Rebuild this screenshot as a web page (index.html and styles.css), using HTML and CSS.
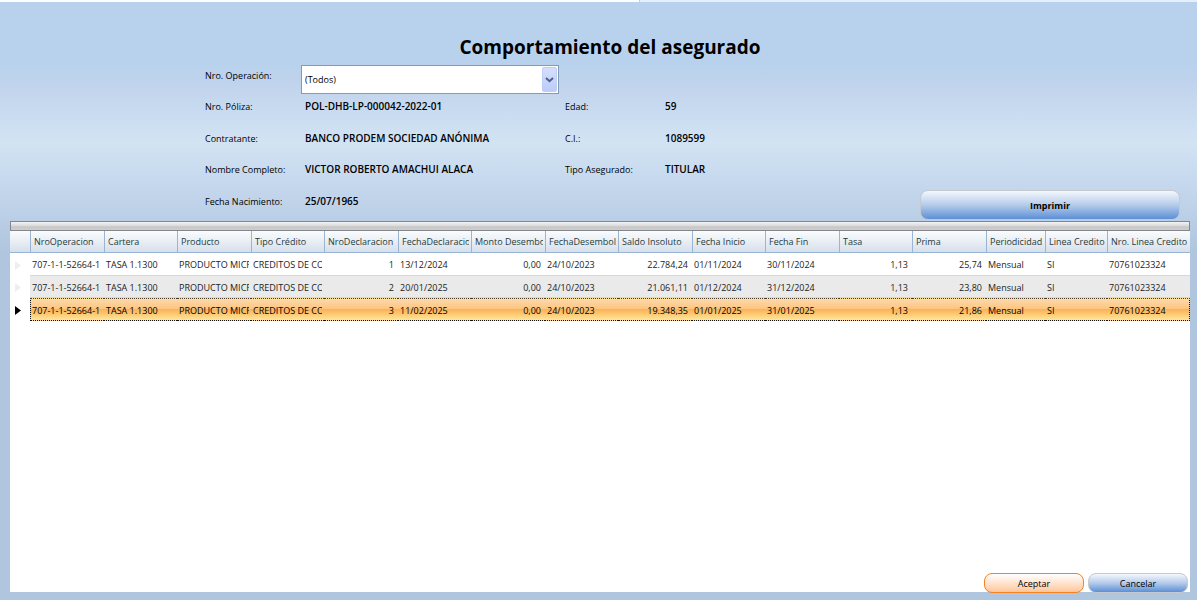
FILE: index.html
```html
<!DOCTYPE html>
<html lang="es">
<head>
<meta charset="utf-8">
<title>Comportamiento del asegurado</title>
<link rel="stylesheet" href="styles.css">
</head>
<body>
<div class="topstrip"><span></span></div>
<main class="page">
  <h1 class="title">Comportamiento del asegurado</h1>
  <form class="summary">
    <div class="fields">
      <label class="field-name" for="operacion">Nro. Operación:</label>
      <div class="combo">
        <select id="operacion"><option>(Todos)</option></select>
        <span class="combo-arrow"><svg width="9" height="6" viewBox="0 0 9 6"><path d="M1 1l3.5 3.2L8 1" fill="none" stroke="#4d6185" stroke-width="2"/></svg></span>
      </div>
      <span class="blank"></span><span class="blank"></span>
      <span class="field-name">Nro. Póliza:</span><span class="field-value">POL-DHB-LP-000042-2022-01</span>
      <span class="field-name">Edad:</span><span class="field-value">59</span>
      <span class="field-name">Contratante:</span><span class="field-value">BANCO PRODEM SOCIEDAD ANÓNIMA</span>
      <span class="field-name">C.I.:</span><span class="field-value">1089599</span>
      <span class="field-name">Nombre Completo:</span><span class="field-value">VICTOR ROBERTO AMACHUI ALACA</span>
      <span class="field-name">Tipo Asegurado:</span><span class="field-value">TITULAR</span>
      <span class="field-name">Fecha Nacimiento:</span><span class="field-value">25/07/1965</span>
    </div>
    <button class="btn btn-print" type="button">Imprimir</button>
  </form>
  <section class="panel">
    <div class="groupbar"></div>
    <table class="grid">
      <colgroup>
        <col class="w-mark"><col class="w-a"><col class="w-b"><col class="w-a"><col class="w-b"><col class="w-a"><col class="w-b"><col class="w-a"><col class="w-b"><col class="w-a"><col class="w-b"><col class="w-a"><col class="w-b"><col class="w-a"><col class="w-period"><col class="w-line"><col class="w-nro">
      </colgroup>
      <thead>
        <tr><th class="mark"></th><th>NroOperacion</th><th>Cartera</th><th>Producto</th><th>Tipo Crédito</th><th>NroDeclaracion</th><th><div class="clip">FechaDeclaracio</div></th><th><div class="clip">Monto Desembo</div></th><th><div class="clip">FechaDesembol</div></th><th>Saldo Insoluto</th><th>Fecha Inicio</th><th>Fecha Fin</th><th>Tasa</th><th>Prima</th><th>Periodicidad</th><th>Linea Credito</th><th>Nro. Linea Credito</th></tr>
      </thead>
      <tbody>
        <tr><td class="mark"><svg width="6" height="9" viewBox="0 0 6 9"><path d="M0 0l6 4.5L0 9z"/></svg></td><td><div class="clip">707-1-1-52664-1</div></td><td>TASA 1.1300</td><td><div class="clip">PRODUCTO MICR</div></td><td><div class="clip">CREDITOS DE CO</div></td><td class="num">1</td><td>13/12/2024</td><td class="num">0,00</td><td>24/10/2023</td><td class="num">22.784,24</td><td>01/11/2024</td><td>30/11/2024</td><td class="num">1,13</td><td class="num">25,74</td><td>Mensual</td><td>SI</td><td>70761023324</td></tr>
        <tr class="alt"><td class="mark"><svg width="6" height="9" viewBox="0 0 6 9"><path d="M0 0l6 4.5L0 9z"/></svg></td><td><div class="clip">707-1-1-52664-1</div></td><td>TASA 1.1300</td><td><div class="clip">PRODUCTO MICR</div></td><td><div class="clip">CREDITOS DE CO</div></td><td class="num">2</td><td>20/01/2025</td><td class="num">0,00</td><td>24/10/2023</td><td class="num">21.061,11</td><td>01/12/2024</td><td>31/12/2024</td><td class="num">1,13</td><td class="num">23,80</td><td>Mensual</td><td>SI</td><td>70761023324</td></tr>
        <tr class="selected"><td class="mark"><svg width="6" height="9" viewBox="0 0 6 9"><path d="M0 0l6 4.5L0 9z"/></svg></td><td><div class="clip">707-1-1-52664-1</div></td><td>TASA 1.1300</td><td><div class="clip">PRODUCTO MICR</div></td><td><div class="clip">CREDITOS DE CO</div></td><td class="num">3</td><td>11/02/2025</td><td class="num">0,00</td><td>24/10/2023</td><td class="num">19.348,35</td><td>01/01/2025</td><td>31/01/2025</td><td class="num">1,13</td><td class="num">21,86</td><td>Mensual</td><td>SI</td><td>70761023324</td></tr>
      </tbody>
    </table>
    <div class="actions">
      <button class="btn btn-ok" type="button">Aceptar</button>
      <button class="btn" type="button">Cancelar</button>
    </div>
  </section>
</main>
</body>
</html>
```

FILE: styles.css
```css
* { box-sizing: border-box; }
body {
  margin: 0;
  min-height: 100vh;
  display: flex;
  flex-direction: column;
  font-family: "Open Sans", "Noto Sans", sans-serif;
  font-size: 9px;
  line-height: 14px;
  color: #000;
}
.topstrip { display: flex; justify-content: flex-end; height: 2px; background: #fff; }
.topstrip span { flex: 0 0 558px; background: #e6f0fc; border-left: 1px solid #ccc; }
.page {
  flex: 1;
  display: flex;
  flex-direction: column;
  padding: 0 7px 8px 10px;
  background: #afc6de linear-gradient(#b8d2ed 0, #b8d2ed 62px, #bfd2ec 76px, #d2e3f3 140px, #c5d7ed 184px, #afc6de 250px) no-repeat;
}
.title {
  margin: 0;
  padding: 31px 0 4px 20px;
  font-size: 19px;
  line-height: 28px;
  font-weight: 700;
  text-align: center;
}
.summary {
  display: flex;
  justify-content: space-between;
  align-items: flex-end;
  padding: 0 10px 0 195px;
}
.fields {
  display: grid;
  grid-template-columns: 96px 264px 100px 100px;
  grid-template-rows: 31px 32px 31px 32px 30px;
}
.field-name, .field-value { padding-top: 4px; white-space: nowrap; }
.field-value { padding-top: 3px; font-size: 10px; font-weight: 600; }
.field-value:nth-child(4n + 2) { padding-left: 4px; }
.combo { position: relative; width: 258px; height: 29px; }
.combo select {
  appearance: none;
  width: 100%;
  height: 100%;
  padding: 0 20px 0 3px;
  border: 1px solid #7f9db9;
  border-radius: 0;
  background: #fff;
  font: inherit;
  color: #000;
}
.combo-arrow {
  position: absolute;
  top: 2px;
  right: 2px;
  bottom: 2px;
  width: 15px;
  display: flex;
  align-items: center;
  justify-content: center;
  border: 1px solid #c0cdf4;
  border-radius: 2px;
  background: linear-gradient(#d5e0fd, #bccbfa);
  pointer-events: none;
}
.btn {
  width: 100px;
  height: 20px;
  padding: 2px 0 0;
  border: 1px solid #c5c9d0;
  border-radius: 8px;
  background: linear-gradient(#f4f8fd, #b5cbea 50%, #5c8fd6);
  font: inherit;
  color: #000;
}
.btn-print {
  width: 260px;
  height: 30px;
  margin-bottom: 1px;
  font-weight: 700;
}
.btn-ok { border-color: #f58220; background: linear-gradient(#fff, #ffe4d0 50%, #ffc599); }
.panel {
  flex: 1;
  display: flex;
  flex-direction: column;
  background: #fff;
}
.groupbar {
  height: 10px;
  border: 1px solid #85858d;
  background: linear-gradient(#f4f4f4, #d8d8d8 50%, #c6c6c6 60%, #cecece);
}
.grid {
  width: 100%;
  table-layout: fixed;
  border-collapse: separate;
  border-spacing: 0;
}
.w-mark { width: 20px; }
.w-a { width: 74px; }
.w-b { width: 73px; }
.w-period { width: 59px; }
.w-line { width: 62px; }
.w-nro { width: 83px; }
.grid th, .grid td {
  padding: 2px 2px 0;
  overflow: hidden;
  white-space: nowrap;
  text-align: left;
  font-weight: 400;
}
.grid th {
  height: 22px;
  padding: 0 2px 0 3px;
  border-left: 1px solid #9ab5d3;
  border-bottom: 1px solid #9ab5d3;
  background: linear-gradient(#fafcfd, #e9eef4 50%, #d5dfec);
  color: #1e3c3c;
}
.clip { overflow: hidden; }
.grid td { height: 23px; border-bottom: 1px solid #cfdae5; color: #222; }
.grid td.num { text-align: right; padding-right: 4px; }
.grid .alt td { height: 22px; background: #eaeaea; }
.grid .selected td {
  border-top: 1px dotted #4a3a22;
  border-bottom: 1px dotted #111;
  background: linear-gradient(#fdd9ae, #fdc680 45%, #fcb255 50%, #fee79b);
  color: #000;
}
.grid .selected td:nth-child(2) { border-left: 1px dotted #111; padding-left: 1px; }
.grid .selected td:last-child { border-right: 1px dotted #111; }
.grid th.mark { border-left: 0; }
.grid .alt td.mark, .grid .selected td.mark, .grid td.mark {
  padding: 1px 0 0 5px;
  border: 0;
  background: #fff;
}
.mark svg { display: block; fill: #eee; }
.selected .mark svg { fill: #000; }
.actions {
  display: flex;
  justify-content: flex-end;
  gap: 4px;
  margin: auto 0 -1px;
  padding-right: 2px;
}
```
